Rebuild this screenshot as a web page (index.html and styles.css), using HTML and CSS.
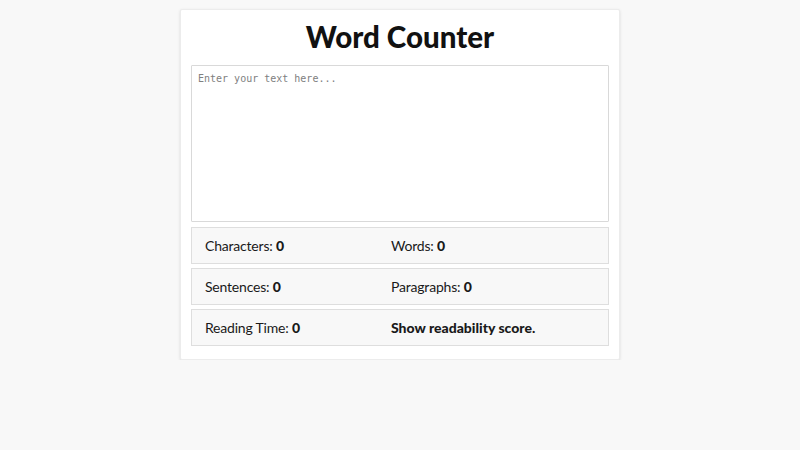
FILE: index.html
```html
<!DOCTYPE html>
<html lang="en">
<head>
<meta charset="utf-8">
<title>Word Counter</title>
<link rel="stylesheet" href="styles.css">
</head>
<body>
<main class="card">
  <h1 class="title">Word Counter</h1>
  <textarea class="input" placeholder="Enter your text here..."></textarea>
  <div class="row">
    <div class="stat">Characters: <b>0</b></div>
    <div class="stat">Words: <b>0</b></div>
  </div>
  <div class="row">
    <div class="stat">Sentences: <b>0</b></div>
    <div class="stat">Paragraphs: <b>0</b></div>
  </div>
  <div class="row">
    <div class="stat">Reading Time: <b>0</b></div>
    <div class="stat"><b class="link">Show readability score.</b></div>
  </div>
</main>
</body>
</html>
```
FILE: styles.css
```css
html, body {
  margin: 0;
  padding: 0;
  background: #f8f8f8;
}

body {
  font-family: "Lato", "Open Sans", sans-serif;
  color: #1a1a1a;
  padding-top: 9px;
}

.card {
  width: 418px;
  margin: 0 auto;
  background: #fff;
  padding: 0 10px 13px;
  box-shadow: 0 1px 3px rgba(0, 0, 0, 0.12);
  border: 1px solid #ececec;
  border-radius: 2px;
}

.title {
  margin: 0;
  height: 55px;
  line-height: 54px;
  text-align: center;
  font-size: 29.5px;
  font-weight: 900;
  color: #111;
}

.input {
  display: block;
  box-sizing: border-box;
  width: 100%;
  height: 157px;
  margin: 0 0 5px;
  padding: 7px 6px;
  border: 1px solid #d9d9d9;
  border-radius: 1px;
  resize: none;
  font-family: "DejaVu Sans Mono", monospace;
  font-size: 10px;
  color: #333;
  background: #fff;
  outline: none;
}

.input::placeholder {
  color: #808080;
}

.row {
  box-sizing: border-box;
  display: grid;
  grid-template-columns: 186px 1fr;
  align-items: center;
  height: 37px;
  margin-bottom: 4px;
  padding: 0 13px;
  background: #f8f8f8;
  border: 1px solid #dedede;
  font-size: 14px;
  letter-spacing: -0.2px;
}

.row:last-child {
  margin-bottom: 0;
}

.stat b {
  font-weight: 900;
  letter-spacing: 0;
}
```
